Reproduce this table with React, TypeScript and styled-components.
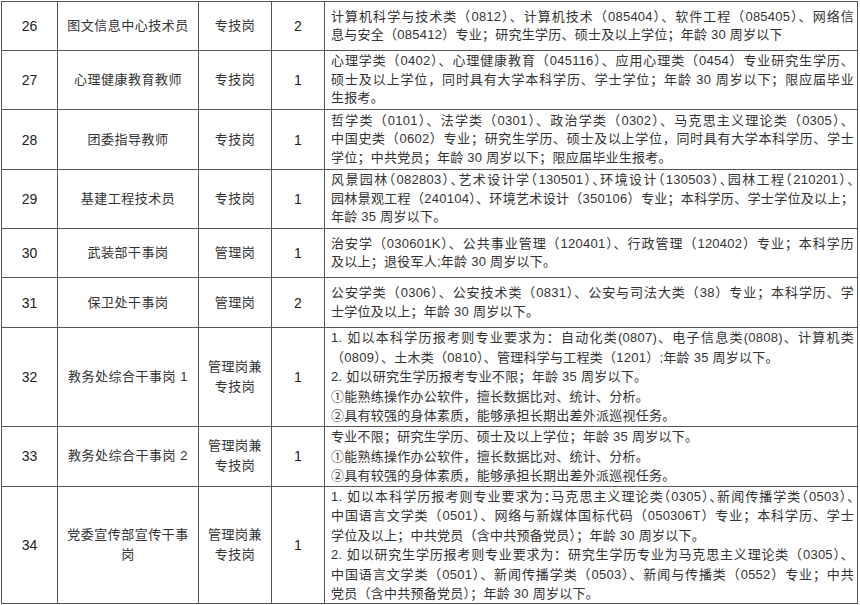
import styled, { createGlobalStyle } from "styled-components";

const GlobalStyle = createGlobalStyle`
  html, body {
    margin: 0;
    padding: 0;
    background: #ffffff;
  }
  body {
    font-family: "Liberation Sans", "Noto Sans CJK SC", sans-serif;
    color: #2a2a2a;
  }
`;

const Page = styled.div`
  padding: 1px 0 0 1px;
`;

const Table = styled.table`
  border-collapse: collapse;
  table-layout: fixed;
  width: 857px;
  border: 1px solid #444444;
`;

const Col = styled.col<{ $w: number }>`
  width: ${(p) => p.$w}px;
`;

const Row = styled.tr<{ $h: number }>`
  height: ${(p) => p.$h}px;
`;

const Cell = styled.td`
  border: 1px solid #555555;
  padding: 0;
  text-align: center;
  vertical-align: middle;
  font-size: 13px;
  line-height: 20px;
  letter-spacing: 0.5px;
  color: #333333;
`;

const NoCell = styled(Cell)`
  font-size: 14px;
  letter-spacing: 0;
  color: #222222;
`;

const DescCell = styled(Cell)<{ $lh: number }>`
  text-align: left;
  padding: 0 3px 0 6px;
  line-height: ${(p) => p.$lh}px;
  letter-spacing: 0.25px;
`;

const Line = styled.div<{ $justify?: boolean; $tight?: boolean }>`
  display: block;
  text-align: ${(p) => (p.$justify ? "justify" : "left")};
  text-align-last: ${(p) => (p.$justify ? "justify" : "auto")};
  font-feature-settings: ${(p) => (p.$tight ? '"halt"' : "normal")};
`;

type L = { t: string; j?: boolean; tight?: boolean };

type Post = {
  no: string;
  title: string[];
  kind: string[];
  count: string;
  h: number;
  lh: number;
  lines: L[];
};

const skill1 = "①能熟练操作办公软件，擅长数据比对、统计、分析。";
const skill2 = "②具有较强的身体素质，能够承担长期出差外派巡视任务。";

const widths = [56, 141, 73, 53, 533];

const posts: Post[] = [
  {
    no: "26",
    title: ["图文信息中心技术员"],
    kind: ["专技岗"],
    count: "2",
    h: 49,
    lh: 18.5,
    lines: [
      { t: "计算机科学与技术类（0812）、计算机技术（085404）、软件工程（085405）、网络信", j: true },
      { t: "息与安全（085412）专业；研究生学历、硕士及以上学位；年龄 30 周岁以下" },
    ],
  },
  {
    no: "27",
    title: ["心理健康教育教师"],
    kind: ["专技岗"],
    count: "1",
    h: 59,
    lh: 18.5,
    lines: [
      { t: "心理学类（0402）、心理健康教育（045116）、应用心理类（0454）专业研究生学历、", j: true },
      { t: "硕士及以上学位，同时具有大学本科学历、学士学位；年龄 30 周岁以下；限应届毕业", j: true },
      { t: "生报考。" },
    ],
  },
  {
    no: "28",
    title: ["团委指导教师"],
    kind: ["专技岗"],
    count: "1",
    h: 60,
    lh: 18.5,
    lines: [
      { t: "哲学类（0101）、法学类（0301）、政治学类（0302）、马克思主义理论类（0305）、", j: true },
      { t: "中国史类（0602）专业；研究生学历、硕士及以上学位，同时具有大学本科学历、学士", j: true },
      { t: "学位；中共党员；年龄 30 周岁以下；限应届毕业生报考。" },
    ],
  },
  {
    no: "29",
    title: ["基建工程技术员"],
    kind: ["专技岗"],
    count: "1",
    h: 59,
    lh: 18.5,
    lines: [
      { t: "风景园林（082803）、艺术设计学（130501）、环境设计（130503）、园林工程（210201）、", j: true, tight: true },
      { t: "园林景观工程（240104）、环境艺术设计（350106）专业；本科学历、学士学位及以上；", j: true },
      { t: "年龄 35 周岁以下。" },
    ],
  },
  {
    no: "30",
    title: ["武装部干事岗"],
    kind: ["管理岗"],
    count: "1",
    h: 49,
    lh: 18.5,
    lines: [
      { t: "治安学（030601K）、公共事业管理（120401）、行政管理（120402）专业；本科学历", j: true },
      { t: "及以上；退役军人;年龄 30 周岁以下。" },
    ],
  },
  {
    no: "31",
    title: ["保卫处干事岗"],
    kind: ["管理岗"],
    count: "2",
    h: 50,
    lh: 18.5,
    lines: [
      { t: "公安学类（0306）、公安技术类（0831）、公安与司法大类（38）专业；本科学历、学", j: true },
      { t: "士学位及以上；年龄 30 周岁以下。" },
    ],
  },
  {
    no: "32",
    title: ["教务处综合干事岗 1"],
    kind: ["管理岗兼", "专技岗"],
    count: "1",
    h: 98,
    lh: 19.6,
    lines: [
      { t: "1. 如以本科学历报考则专业要求为：自动化类(0807)、电子信息类(0808)、计算机类", j: true },
      { t: "（0809）、土木类（0810）、管理科学与工程类（1201）;年龄 35 周岁以下。" },
      { t: "2. 如以研究生学历报考专业不限；年龄 35 周岁以下。" },
      { t: skill1 },
      { t: skill2 },
    ],
  },
  {
    no: "33",
    title: ["教务处综合干事岗 2"],
    kind: ["管理岗兼", "专技岗"],
    count: "1",
    h: 60,
    lh: 19.6,
    lines: [
      { t: "专业不限；研究生学历、硕士及以上学位；年龄 35 周岁以下。" },
      { t: skill1 },
      { t: skill2 },
    ],
  },
  {
    no: "34",
    title: ["党委宣传部宣传干事", "岗"],
    kind: ["管理岗兼", "专技岗"],
    count: "1",
    h: 116,
    lh: 19.4,
    lines: [
      { t: "1. 如以本科学历报考则专业要求为：马克思主义理论类（0305）、新闻传播学类（0503）、", j: true, tight: true },
      { t: "中国语言文学类（0501）、网络与新媒体国标代码（050306T）专业；本科学历、学士", j: true },
      { t: "学位及以上；中共党员（含中共预备党员）；年龄 30 周岁以下。" },
      { t: "2. 如以研究生学历报考则专业要求为：研究生学历专业为马克思主义理论类（0305）、", j: true },
      { t: "中国语言文学类（0501）、新闻传播学类（0503）、新闻与传播类（0552）专业；中共", j: true },
      { t: "党员（含中共预备党员）；年龄 30 周岁以下。" },
    ],
  },
];

const App = () => {
  return (
    <Page>
      <GlobalStyle />
      <Table>
        <colgroup>
          {widths.map((w, i) => (
            <Col key={i} $w={w} />
          ))}
        </colgroup>
        <tbody>
          {posts.map((p) => (
            <Row key={p.no} $h={p.h}>
              <NoCell>{p.no}</NoCell>
              <Cell>
                {p.title.map((t) => (
                  <div key={t}>{t}</div>
                ))}
              </Cell>
              <Cell>
                {p.kind.map((t) => (
                  <div key={t}>{t}</div>
                ))}
              </Cell>
              <NoCell>{p.count}</NoCell>
              <DescCell $lh={p.lh}>
                {p.lines.map((l, i) => (
                  <Line key={i} $justify={l.j} $tight={l.tight}>
                    {l.t}
                  </Line>
                ))}
              </DescCell>
            </Row>
          ))}
        </tbody>
      </Table>
    </Page>
  );
};

export default App;
